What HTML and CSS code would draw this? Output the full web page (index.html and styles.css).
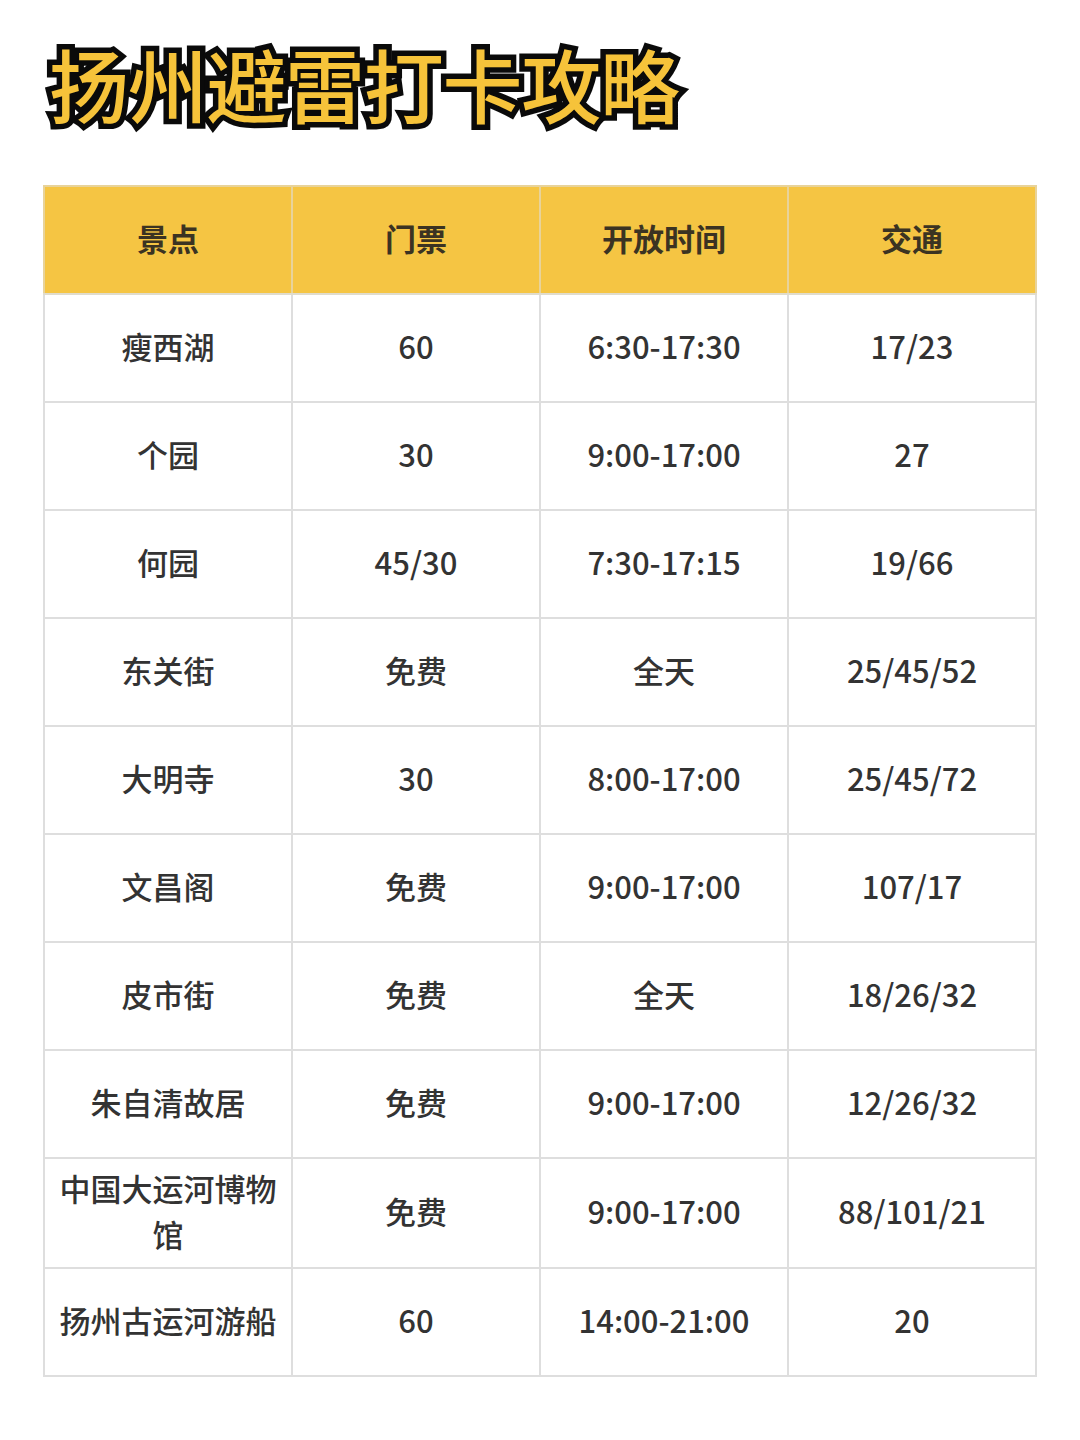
FILE: index.html
```html
<!DOCTYPE html>
<html lang="zh-CN">
<head>
<meta charset="utf-8">
<link rel="stylesheet" href="styles.css">
</head>
<body>
<div class="page">
  <h1 class="title">扬州避雷打卡攻略</h1>
  <table class="guide">
    <thead>
      <tr><th>景点</th><th>门票</th><th>开放时间</th><th>交通</th></tr>
    </thead>
    <tbody>
      <tr><td>瘦西湖</td><td>60</td><td>6:30-17:30</td><td>17/23</td></tr>
      <tr><td>个园</td><td>30</td><td>9:00-17:00</td><td>27</td></tr>
      <tr><td>何园</td><td>45/30</td><td>7:30-17:15</td><td>19/66</td></tr>
      <tr><td>东关街</td><td>免费</td><td>全天</td><td>25/45/52</td></tr>
      <tr><td>大明寺</td><td>30</td><td>8:00-17:00</td><td>25/45/72</td></tr>
      <tr><td>文昌阁</td><td>免费</td><td>9:00-17:00</td><td>107/17</td></tr>
      <tr><td>皮市街</td><td>免费</td><td>全天</td><td>18/26/32</td></tr>
      <tr><td>朱自清故居</td><td>免费</td><td>9:00-17:00</td><td>12/26/32</td></tr>
      <tr class="tall"><td>中国大运河博物馆</td><td>免费</td><td>9:00-17:00</td><td>88/101/21</td></tr>
      <tr><td>扬州古运河游船</td><td>60</td><td>14:00-21:00</td><td>20</td></tr>
    </tbody>
  </table>
</div>
</body>
</html>
```

FILE: styles.css
```css
html, body {
  margin: 0;
  padding: 0;
  background: #ffffff;
}

.page {
  padding: 27px 43px 0 43px;
  font-family: "Noto Sans CJK SC", "Noto Sans", sans-serif;
}

.title {
  margin: 0 0 0 6px;
  font-size: 80px;
  line-height: 110px;
  font-weight: 500;
  letter-spacing: -1.3px;
  color: #f6c33a;
  -webkit-text-stroke: 11px #0a0a0a;
  paint-order: stroke fill;
  height: 110px;
}

.guide {
  margin-top: 48px;
  width: 994px;
  border-collapse: collapse;
  table-layout: fixed;
}

.guide th,
.guide td {
  width: 25%;
  height: 102px;
  padding: 0 12px 4px 12px;
  text-align: center;
  vertical-align: middle;
  font-size: 31px;
  line-height: 46px;
  color: #333333;
  font-weight: 500;
  border: 2px solid #dedede;
}

.guide .tall td {
  height: 104px;
}

.guide th {
  background: #f5c543;
  color: #3b3322;
  border-color: #e8d39a;
  font-weight: 600;
}

.guide thead th {
  border-bottom-color: #e0dccc;
}
```
